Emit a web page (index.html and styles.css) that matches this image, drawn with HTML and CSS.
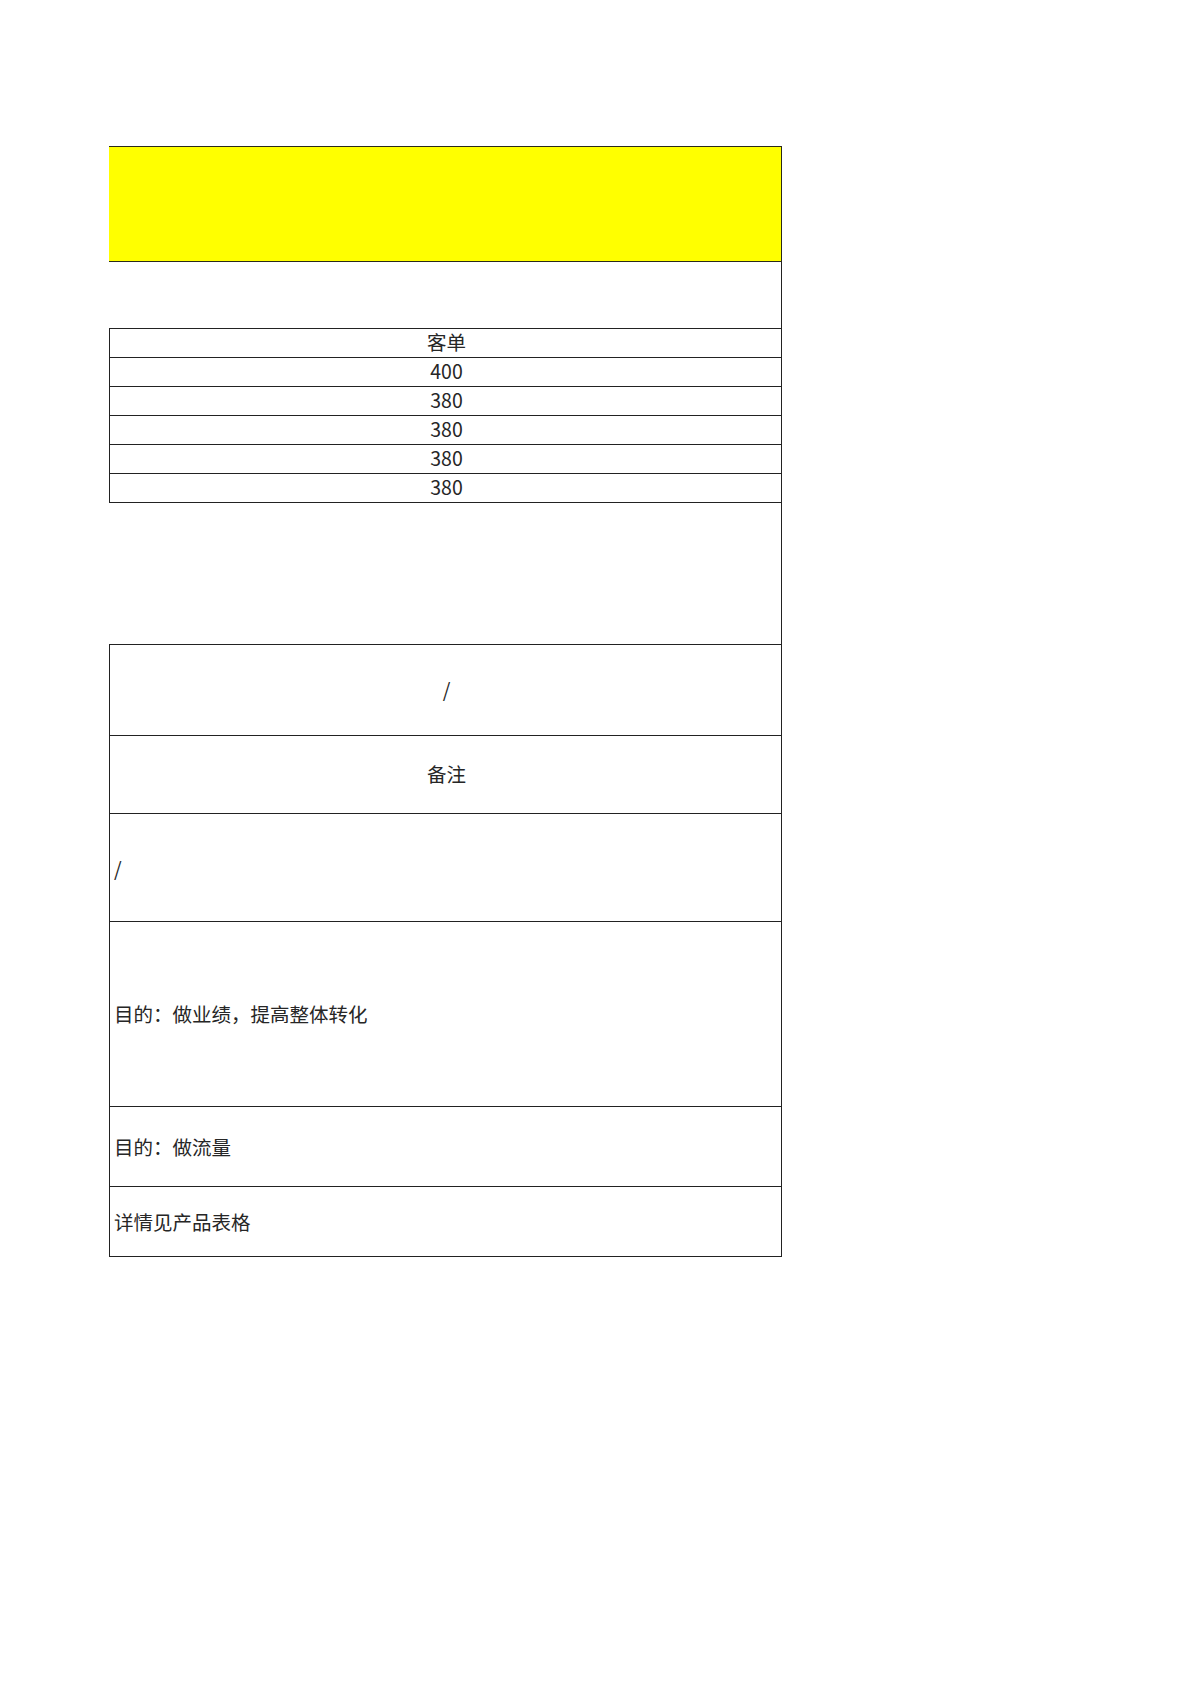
FILE: index.html
```html
<!DOCTYPE html>
<html lang="zh-CN">
<head>
<meta charset="utf-8">
<title>Sheet</title>
<link rel="stylesheet" href="styles.css">
</head>
<body>
<div class="sheet">
  <div class="title"></div>
  <div class="gap gap-a"></div>
  <div class="grid">
    <div class="row">客单</div>
    <div class="row">400</div>
    <div class="row">380</div>
    <div class="row">380</div>
    <div class="row">380</div>
    <div class="row">380</div>
  </div>
  <div class="gap gap-b"></div>
  <div class="notes">
    <div class="cell center h1">/</div>
    <div class="cell center h2">备注</div>
    <div class="cell h3">/</div>
    <div class="cell h4">目的：做业绩，提高整体转化</div>
    <div class="cell h5">目的：做流量</div>
    <div class="cell h6">详情见产品表格</div>
  </div>
</div>
</body>
</html>
```

FILE: styles.css
```css
* { box-sizing: border-box; }
html, body { margin: 0; padding: 0; background: #fff; }
body {
  font-family: "Noto Sans CJK SC", "Noto Sans", sans-serif;
  font-size: 19.5px;
  color: #262626;
}
.sheet {
  margin-left: 109px;
  padding-top: 146px;
  width: 673px;
  display: flex;
  flex-direction: column;
}
.title {
  height: 116px;
  background: #ffff00;
  border-top: 1px solid #2a2a1a;
  border-bottom: 1px solid #2a2a1a;
  border-right: 1px solid #2a2a1a;
}
.gap { border-right: 1px solid #222; }
.gap-a { height: 66px; }
.gap-b { height: 141px; }
.grid {
  border: 1px solid #222;
  border-bottom: none;
  display: flex;
  flex-direction: column;
}
.row {
  height: 29px;
  border-bottom: 1px solid #222;
  display: flex;
  align-items: center;
  justify-content: center;
  line-height: 1;
  padding-left: 2px;
  padding-bottom: 2px;
}
.notes {
  border: 1px solid #222;
  border-bottom: none;
  display: flex;
  flex-direction: column;
}
.cell {
  border-bottom: 1px solid #222;
  display: flex;
  align-items: center;
  padding-left: 4px;
  line-height: 1;
}
.center { justify-content: center; padding-left: 2px; padding-bottom: 2px; }
.h1 { height: 91px; }
.h2 { height: 78px; }
.h3 { height: 108px; }
.h4 { height: 185px; }
.h5 { height: 80px; }
.h6 { height: 70px; }
```
